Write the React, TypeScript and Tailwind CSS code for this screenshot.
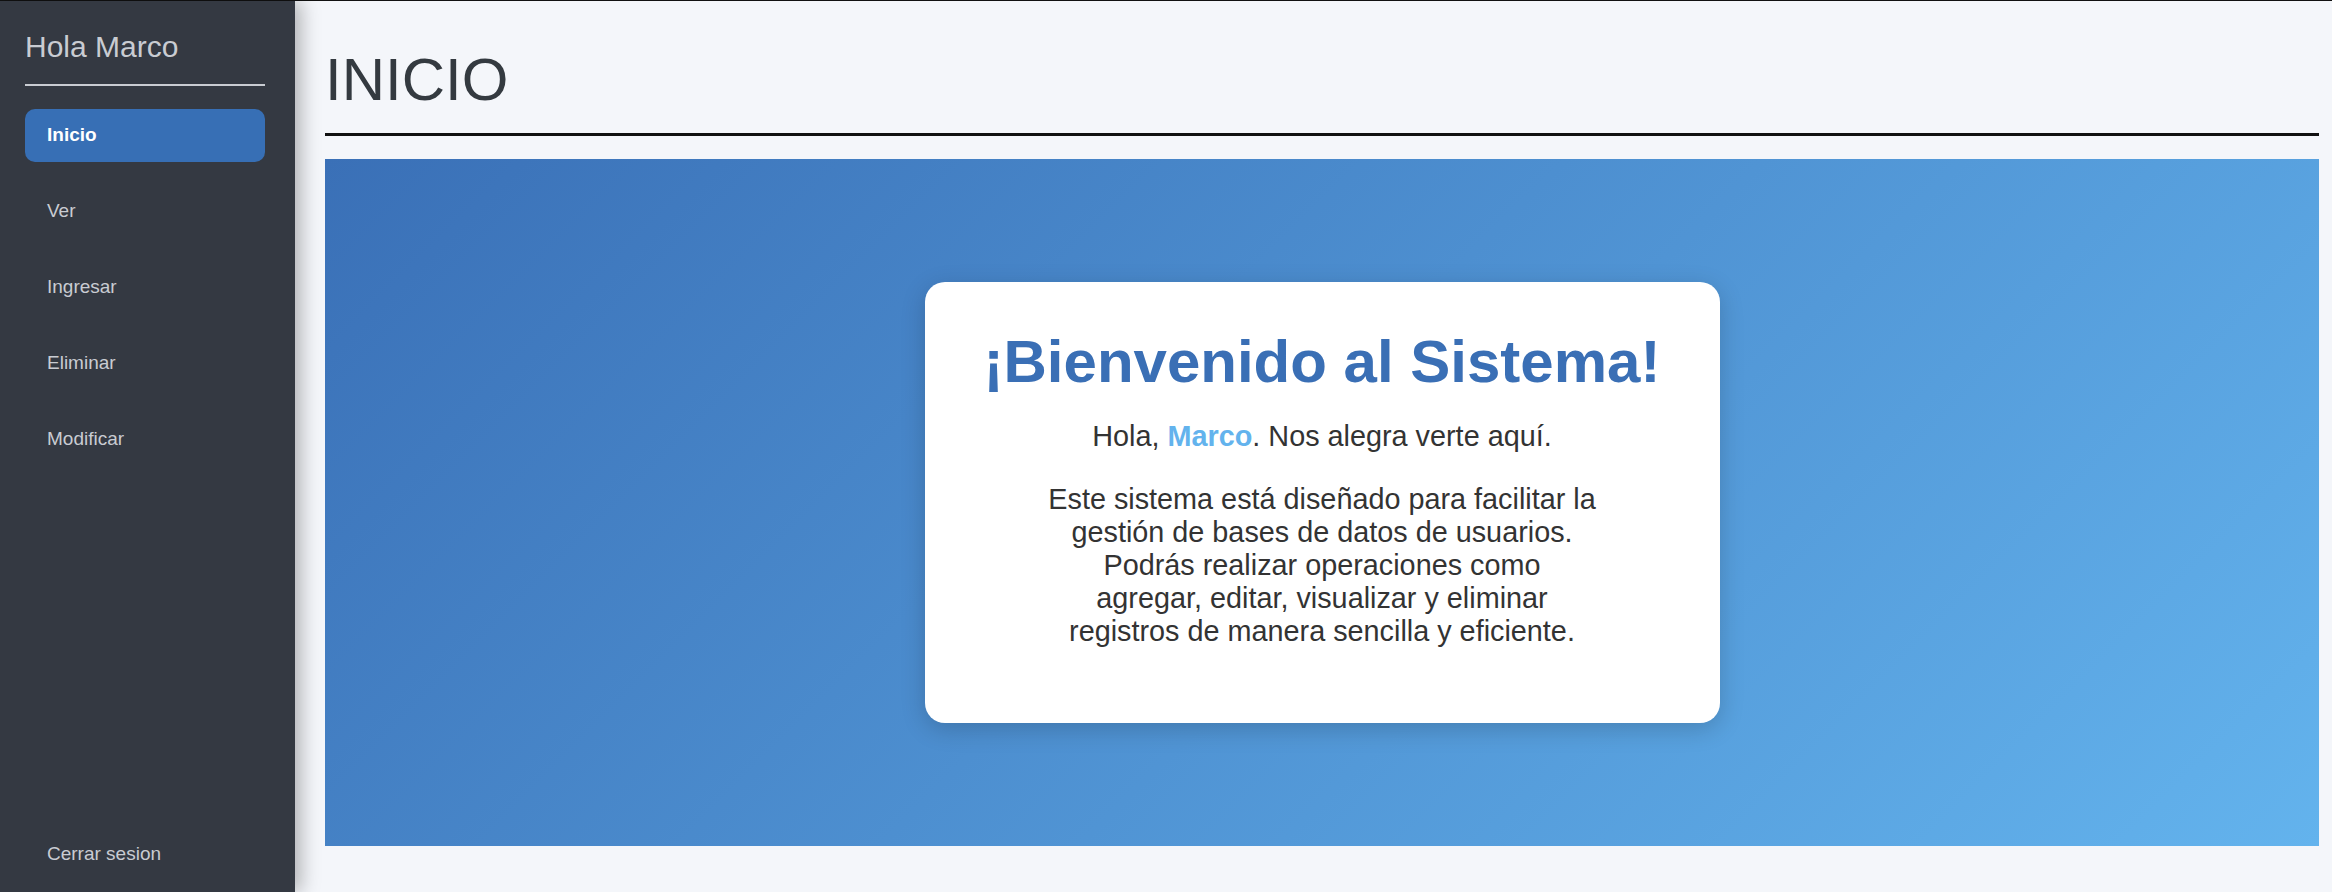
import React from 'react';

const links = ['Inicio', 'Ver', 'Ingresar', 'Eliminar', 'Modificar'];

const Sidebar: React.FC<{ active: string }> = ({ active }) => (
  <aside className="relative z-10 flex w-[295px] shrink-0 flex-col bg-[#343942] pt-[29px] pr-[30px] pb-[27px] pl-[25px] shadow-[6px_0_18px_rgba(0,0,0,0.28)]">
    <h2 className="text-[30px] leading-[34px] text-[#c9ccd2]">Hola Marco</h2>
    <div className="mt-[20px] h-[2px] bg-[#c9ccd2]" />
    <nav className="mt-[23px] flex flex-col gap-[23px]">
      {links.map((link) => (
        <a
          key={link}
          href="#"
          className={
            link === active
              ? 'flex h-[53px] items-center rounded-[10px] bg-[#376fb5] px-[22px] text-[19px] font-bold text-white'
              : 'flex h-[53px] items-center rounded-[10px] px-[22px] text-[19px] text-[#c9ccd2]'
          }
        >
          {link}
        </a>
      ))}
    </nav>
    <a href="#" className="mt-auto px-[22px] text-[19px] leading-[22px] text-[#c9ccd2]">
      Cerrar sesion
    </a>
  </aside>
);

const Welcome: React.FC<{ name: string }> = ({ name }) => (
  <div className="w-[795px] rounded-[20px] bg-white px-[40px] pt-[46px] pb-[46px] text-center shadow-[0_6px_24px_rgba(0,0,0,0.18)]">
    <h1 className="text-[60px] leading-[68px] font-bold text-[#3a6fb5]">¡Bienvenido al Sistema!</h1>
    <p className="mt-[24px] text-[28.8px] leading-[33px] text-[#333]">
      Hola, <span className="font-bold text-[#63b3ed]">{name}</span>. Nos alegra verte aquí.
    </p>
    <p className="mx-auto mt-[30px] mb-[29px] max-w-[550px] text-[28.8px] leading-[33px] text-[#333]">
      Este sistema está diseñado para facilitar la gestión de bases de datos de usuarios. Podrás realizar
      operaciones como agregar, editar, visualizar y eliminar registros de manera sencilla y eficiente.
    </p>
  </div>
);

export default function App() {
  return (
    <div className="flex h-[892px] border-t border-[#111] bg-[#f4f6fa] font-['Liberation_Sans',Arial,sans-serif]">
      <Sidebar active="Inicio" />
      <main className="flex flex-1 flex-col pt-[44px] pr-[13px] pb-[46px] pl-[30px]">
        <h1 className="text-[60px] leading-[69px] text-[#343a40]">INICIO</h1>
        <div className="mt-[19px] h-[3px] bg-[#111]" />
        <section className="mt-[23px] flex flex-1 items-center justify-center bg-[linear-gradient(135deg,#3a70b7,#63b3ed)]">
          <Welcome name="Marco" />
        </section>
      </main>
    </div>
  );
}
